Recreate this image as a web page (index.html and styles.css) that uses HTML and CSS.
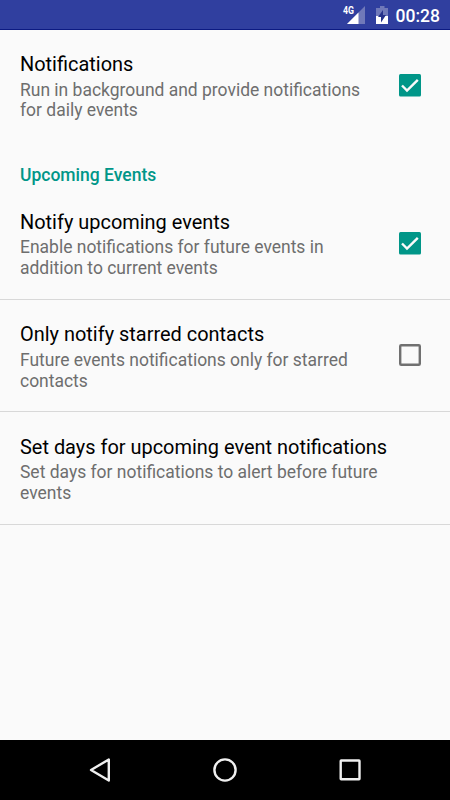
FILE: index.html
```html
<!DOCTYPE html>
<html lang="en">
<head>
<meta charset="utf-8">
<title>Notifications</title>
<link rel="stylesheet" href="styles.css">
</head>
<body>
<header class="status">
  <svg class="signal" width="24" height="30" viewBox="0 0 24 30"><path d="M24 6v18H6z" fill="#7079b9"/><path d="M17.500 12.500V24H6z" fill="#fff"/><path d="M0 5h14v9.500H0z" fill="#303f9f"/><text class="net" x="2" y="14" textLength="11" lengthAdjust="spacingAndGlyphs">4G</text></svg>
  <svg class="battery" width="12" height="30" viewBox="0 0 12 30"><path d="M4 6h4.500v2H12v8H0V8h4z" fill="#7079b9"/><path d="M0 16h12v8H0z" fill="#fff"/><path d="M7 10v5h3l-5 7.500V17H2z" fill="#25318a"/></svg>
  <span class="clock">00:28</span>
</header>
<main class="settings">
  <section class="row first">
    <div class="copy"><h2>Notifications</h2><p>Run in background and provide notifications<br>for daily events</p></div>
    <svg class="box" viewBox="0 0 24 24"><rect x="1" y="1" width="22" height="22.500" rx="1.500" fill="#009688"/><path d="M4 12.500l5 5L19.800 6.800" fill="none" stroke="#fafafa" stroke-width="2.400"/></svg>
  </section>
  <h1 class="category">Upcoming Events</h1>
  <section class="row">
    <div class="copy"><h2>Notify upcoming events</h2><p>Enable notifications for future events in<br>addition to current events</p></div>
    <svg class="box" viewBox="0 0 24 24"><rect x="1" y="1" width="22" height="22.500" rx="1.500" fill="#009688"/><path d="M4 12.500l5 5L19.800 6.800" fill="none" stroke="#fafafa" stroke-width="2.400"/></svg>
  </section>
  <section class="row">
    <div class="copy"><h2>Only notify starred contacts</h2><p>Future events notifications only for starred<br>contacts</p></div>
    <svg class="box" viewBox="0 0 24 24"><rect x="2.200" y="2.200" width="19.600" height="19.600" rx="1" fill="none" stroke="#707070" stroke-width="2.400"/></svg>
  </section>
  <section class="row">
    <div class="copy"><h2>Set days for upcoming event notifications</h2><p>Set days for notifications to alert before future<br>events</p></div>
  </section>
</main>
<nav class="navbar">
  <svg viewBox="0 0 30 30"><path d="M23.800 4.500v21L6 15z"/></svg>
  <svg viewBox="0 0 30 30"><circle cx="15" cy="15" r="10.600"/></svg>
  <svg viewBox="0 0 30 30"><rect x="5.700" y="5.500" width="18.800" height="18.800" rx=".5"/></svg>
</nav>
</body>
</html>
```
FILE: styles.css
```css
* { box-sizing: border-box; }
body { margin: 0; height: 800px; display: flex; flex-direction: column; overflow: hidden; background: #fafafa; font-family: Roboto, sans-serif; }
.status { height: 30px; display: flex; align-items: flex-start; justify-content: flex-end; padding-right: 10px; background: #303f9f; border-bottom: 1px solid #0c1a82; color: #fff; }
.signal { margin-right: 11px; }
.net { font: 700 10.5px Roboto, sans-serif; fill: #fff; }
.battery { margin-right: 8px; }
.clock { font-size: 17.5px; font-weight: 500; line-height: 32px; }
.settings { flex: 1; }
.row { height: 112.5px; display: flex; align-items: center; justify-content: space-between; padding: 0 28px 0 20px; border-bottom: 1px solid #d8d8d8; }
.first { height: 110px; border: 0; }
.copy { padding-top: 3px; white-space: nowrap; }
h2 { margin: 0; font-size: 19.95px; line-height: 24px; font-weight: 400; color: #000; }
p { margin: 3.6px 0 0; font-size: 17.48px; line-height: 20.6px; color: #6e6e6e; }
.category { margin: 0; height: 47px; padding: 23px 20px 0; font-size: 17.5px; line-height: 24px; font-weight: 500; color: #009688; }
.box { width: 24px; height: 24px; flex: none; }
.navbar { height: 60px; background: #000; display: flex; justify-content: center; align-items: center; gap: 95px; }
.navbar svg { width: 30px; height: 30px; fill: none; stroke: #f0f0f0; stroke-width: 2.4; stroke-linejoin: round; }
```
